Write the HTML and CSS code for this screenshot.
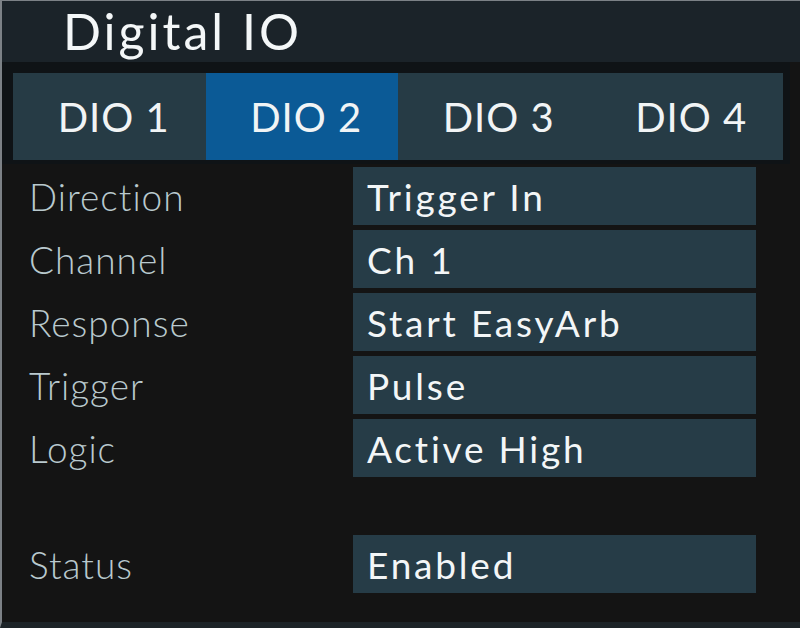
FILE: index.html
```html
<!DOCTYPE html>
<html>
<head>
<meta charset="utf-8">
<link rel="stylesheet" href="styles.css">
</head>
<body>
<div class="screen">
  <header class="header">
    <h1 class="title">Digital IO</h1>
  </header>
  <div class="tabs-wrap">
    <nav class="tabs">
      <div class="tab">DIO 1</div>
      <div class="tab active">DIO 2</div>
      <div class="tab">DIO 3</div>
      <div class="tab">DIO 4</div>
    </nav>
  </div>
  <div class="rows">
    <div class="row"><div class="label">Direction</div><div class="value">Trigger In</div></div>
    <div class="row"><div class="label">Channel</div><div class="value">Ch 1</div></div>
    <div class="row"><div class="label">Response</div><div class="value">Start EasyArb</div></div>
    <div class="row"><div class="label">Trigger</div><div class="value">Pulse</div></div>
    <div class="row"><div class="label">Logic</div><div class="value">Active High</div></div>
    <div class="row status"><div class="label">Status</div><div class="value">Enabled</div></div>
  </div>
</div>
</body>
</html>
```
FILE: styles.css
```css
* { box-sizing: border-box; }
html, body { margin: 0; padding: 0; background: #1a1f23; }
.screen {
  width: 800px;
  height: 628px;
  border-left: 2px solid #7c8186;
  border-top: 1px solid #7c8186;
  border-bottom: 6px solid #1d2428;
  background: #141414;
  font-family: Lato, "Open Sans", sans-serif;
  overflow: hidden;
  display: flex;
  flex-direction: column;
  padding-right: 10px;
}
.header {
  height: 61px;
  background: #1b2329;
  margin-right: -10px;
  padding: 0 0 0 61px;
}
.title {
  margin: 0;
  font-weight: 400;
  font-size: 50px;
  line-height: normal;
  letter-spacing: 3px;
  color: #f4f7f8;
}
.tabs-wrap {
  background: #0f1316;
  padding: 11px 7px 4px 11px;
}
.tabs {
  display: grid;
  grid-template-columns: repeat(4, 1fr);
  height: 87px;
  background: #263b45;
}
.tab {
  display: flex;
  align-items: center;
  justify-content: center;
  padding-left: 9px;
  font-size: 40px;
  letter-spacing: 1px;
  color: #f1f4f5;
}
.tab.active { background: #0b5a96; }
.rows {
  display: flex;
  flex-direction: column;
  gap: 5px;
  padding: 3px 0 0 27px;
}
.row {
  display: flex;
  align-items: center;
  height: 58px;
}
.row.status { margin-top: 53px; }
.label {
  width: 324px;
  font-size: 37px;
  font-weight: 300;
  letter-spacing: 1px;
  color: #b9c9ce;
}
.value {
  width: 403px;
  height: 58px;
  background: #263c47;
  padding-left: 14px;
  display: flex;
  align-items: center;
  font-size: 37px;
  letter-spacing: 2.8px;
  color: #f3f6f7;
}
```
